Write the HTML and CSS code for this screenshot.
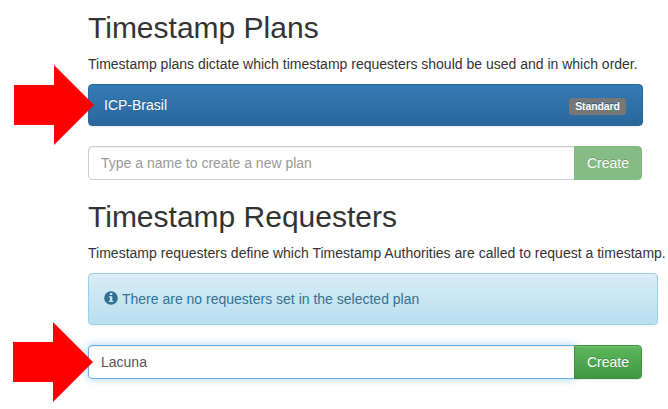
FILE: index.html
```html
<!DOCTYPE html>
<html lang="en">
<head>
<meta charset="utf-8">
<title>Timestamp Plans</title>
<link rel="stylesheet" href="styles.css">
</head>
<body>
<main class="page">
  <section>
    <h2>Timestamp Plans</h2>
    <p>Timestamp plans dictate which timestamp requesters should be used and in which order.</p>
    <div class="plan">
      <span>ICP-Brasil</span>
      <span class="label">Standard</span>
    </div>
    <div class="input-group">
      <input class="form-control" type="text" placeholder="Type a name to create a new plan">
      <button class="btn" disabled>Create</button>
    </div>
  </section>
  <section>
    <h2>Timestamp Requesters</h2>
    <p class="requester-text">Timestamp requesters define which Timestamp Authorities are called to request a timestamp.</p>
    <div class="alert">
      <svg class="info" viewBox="0 0 14 14" width="14" height="14" aria-hidden="true">
        <path fill="currentColor" fill-rule="evenodd" d="M7 .2a6.8 6.8 0 1 1 0 13.6A6.8 6.8 0 0 1 7 .2zM5.9 2v2h2.4V2zM4.8 5.2v1h1.1v3.6H4.8v1.2h4.6V9.800H8.300V5.200z"/>
      </svg>
      <span>There are no requesters set in the selected plan</span>
    </div>
    <div class="input-group">
      <input class="form-control active" type="text" value="Lacuna">
      <button class="btn">Create</button>
    </div>
  </section>
</main>
<svg class="arrow arrow-plan" viewBox="0 0 80 80" aria-hidden="true"><path d="M0 20H40V0L80 40L40 80V60H0z"/></svg>
<svg class="arrow arrow-requester" viewBox="0 0 80 80" aria-hidden="true"><path d="M0 20H40V0L80 40L40 80V60H0z"/></svg>
</body>
</html>
```
FILE: styles.css
```css
* { box-sizing: border-box; }

body {
  margin: 0;
  position: relative;
  height: 409px;
  overflow: hidden;
  background: #fff;
  color: #333;
  font: 14px/20px "Liberation Sans", Arial, sans-serif;
}

.page { padding: 11px 0 0 88px; }

h2 {
  margin: 0 0 10px;
  font-size: 30px;
  font-weight: 500;
  line-height: 33px;
}

section + section { margin-top: 20px; }

p {
  margin: 0 0 10px;
  white-space: nowrap;
}

.requester-text { letter-spacing: .01px; }

.plan {
  display: flex;
  justify-content: space-between;
  align-items: center;
  width: 555px;
  height: 42px;
  margin-bottom: 20px;
  padding: 0 16px 0 15px;
  border: 1px solid #2b669a;
  border-radius: 4px;
  background: linear-gradient(#337ab7, #2b669a);
  box-shadow: 0 1px 2px rgba(0, 0, 0, .075);
  color: #fff;
  text-shadow: 0 -1px 0 #286090;
}

.label {
  width: 57px;
  height: 17px;
  margin-top: 2px;
  border-radius: 3px;
  background: #777;
  font-size: 10.5px;
  font-weight: 700;
  line-height: 16px;
  letter-spacing: -.1px;
  text-align: center;
}

.input-group {
  display: flex;
  width: 554px;
}

.form-control {
  flex: 1;
  min-width: 0;
  height: 34px;
  padding: 6px 12px;
  border: 1px solid #ccc;
  border-radius: 4px 0 0 4px;
  background: #fff;
  box-shadow: inset 0 1px 1px rgba(0, 0, 0, .075);
  color: #555;
  font: inherit;
  outline: 0;
}

.form-control::placeholder { color: #999; opacity: 1; }

.form-control.active {
  border-color: #66afe9;
  box-shadow: inset 0 1px 1px rgba(0, 0, 0, .075), 0 0 8px rgba(102, 175, 233, .6);
}

.btn {
  position: relative;
  width: 68px;
  height: 34px;
  margin-left: -1px;
  padding: 0;
  border: 1px solid #3e8f3e;
  border-radius: 0 4px 4px 0;
  background: linear-gradient(#5cb85c, #419641);
  box-shadow: inset 0 1px 0 rgba(255, 255, 255, .15), 0 1px 1px rgba(0, 0, 0, .075);
  color: #fff;
  font: inherit;
  text-shadow: 0 -1px 0 rgba(0, 0, 0, .2);
}

.btn:disabled {
  border-color: #7fbf7f;
  background: #85bb85;
  box-shadow: none;
}

.alert {
  display: flex;
  align-items: center;
  gap: 4px;
  width: 570px;
  height: 52px;
  margin-bottom: 20px;
  padding: 0 15px;
  border: 1px solid #9acfea;
  border-radius: 4px;
  background: linear-gradient(#d9edf7, #b9def0);
  box-shadow: inset 0 1px 0 rgba(255, 255, 255, .25), 0 1px 2px rgba(0, 0, 0, .05);
  color: #31708f;
  text-shadow: 0 1px 0 rgba(255, 255, 255, .2);
}

.info { margin-top: -3px; }

/* Callout arrows lie over the edges of the fields. */
.arrow {
  position: absolute;
  width: 80px;
  height: 80px;
  fill: #f00;
}

.arrow-plan { left: 14px; top: 65px; }
.arrow-requester { left: 13px; top: 322px; }
```
